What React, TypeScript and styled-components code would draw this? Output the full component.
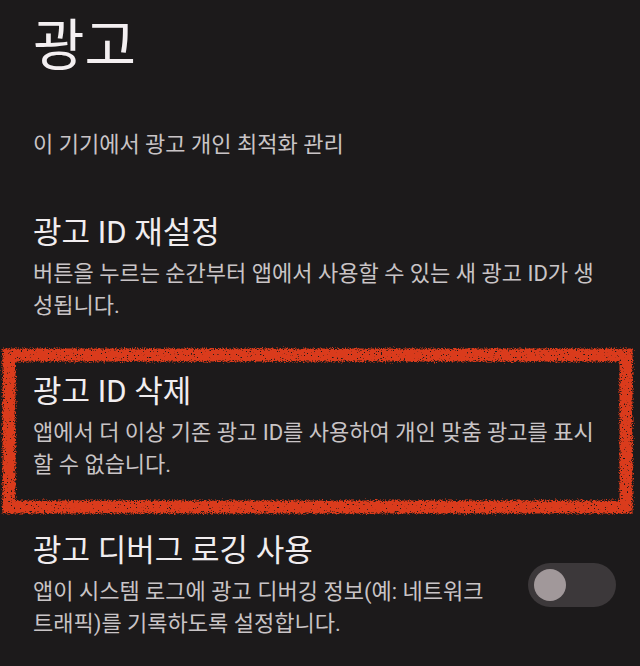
import React from 'react';
import styled, { createGlobalStyle } from 'styled-components';

const GlobalStyle = createGlobalStyle`
  html, body {
    margin: 0;
    padding: 0;
    background: #1c1a1b;
  }
  body {
    font-family: Roboto, "Noto Sans CJK KR", sans-serif;
    -webkit-font-smoothing: antialiased;
  }
`;

const Page = styled.main`
  width: 640px;
  height: 666px;
  overflow: hidden;
  background: #1c1a1b;
  color: #f1edef;
`;

const Header = styled.header`
  padding: 14px 33px 27px;
`;

const PageTitle = styled.h1`
  margin: 0;
  font-size: 56px;
  line-height: 64px;
  font-weight: 400;
  color: #f3eff1;
`;

const Intro = styled.p`
  margin: 51px 0 0;
  font-size: 22px;
  line-height: 32px;
  color: #c9c4c6;
`;

const Item = styled.section`
  position: relative;
  display: flex;
  align-items: center;
  gap: 24px;
  padding: 25px 24px 26px 33px;
`;

const ItemText = styled.div`
  flex: 1;
  min-width: 0;
  padding-right: 8px;
`;

const ItemTitle = styled.h2`
  margin: 0;
  font-size: 31px;
  line-height: 40px;
  font-weight: 400;
  color: #f1edef;
`;

const ItemDesc = styled.p`
  margin: 5px 0 0;
  font-size: 22px;
  line-height: 31.5px;
  color: #c9c4c6;
`;

const Switch = styled.button`
  flex-shrink: 0;
  width: 88px;
  height: 44px;
  border: none;
  border-radius: 22px;
  background: #3c383a;
  padding: 0 6px;
  display: flex;
  align-items: center;
  cursor: pointer;
`;

const Thumb = styled.span`
  width: 32px;
  height: 32px;
  border-radius: 50%;
  background: #a1989a;
`;

const Marker = styled.svg`
  position: absolute;
  top: 0;
  left: 0;
  width: 640px;
  height: 175px;
  overflow: visible;
  pointer-events: none;
  z-index: 2;
`;

const RoughFrame: React.FC = () => (
  <Marker viewBox="0 0 640 175" aria-hidden="true">
    <defs>
      <filter id="rough" x="-3%" y="-10%" width="106%" height="120%">
        <feTurbulence type="fractalNoise" baseFrequency="0.9" numOctaves="2" seed="3" result="noise" />
        <feDisplacementMap in="SourceGraphic" in2="noise" scale="6" xChannelSelector="R" yChannelSelector="G" result="disp" />
        <feTurbulence type="fractalNoise" baseFrequency="0.7" numOctaves="2" seed="11" result="speck" />
        <feColorMatrix
          in="speck"
          type="matrix"
          values="0 0 0 0 0  0 0 0 0 0  0 0 0 0 0  14 0 0 0 -9.6"
          result="holes"
        />
        <feComposite in="disp" in2="holes" operator="out" />
      </filter>
    </defs>
    <rect
      x="9"
      y="8"
      width="617"
      height="152"
      fill="none"
      stroke="#da3a1b"
      strokeWidth="13"
      filter="url(#rough)"
    />
  </Marker>
);

export default function App() {
  return (
    <>
      <GlobalStyle />
      <Page>
        <Header>
          <PageTitle>광고</PageTitle>
          <Intro>이 기기에서 광고 개인 최적화 관리</Intro>
        </Header>

        <Item>
          <ItemText>
            <ItemTitle>광고 ID 재설정</ItemTitle>
            <ItemDesc>버튼을 누르는 순간부터 앱에서 사용할 수 있는 새 광고 ID가 생성됩니다.</ItemDesc>
          </ItemText>
        </Item>

        <Item>
          <RoughFrame />
          <ItemText>
            <ItemTitle>광고 ID 삭제</ItemTitle>
            <ItemDesc>앱에서 더 이상 기존 광고 ID를 사용하여 개인 맞춤 광고를 표시할 수 없습니다.</ItemDesc>
          </ItemText>
        </Item>

        <Item>
          <ItemText>
            <ItemTitle>광고 디버그 로깅 사용</ItemTitle>
            <ItemDesc>앱이 시스템 로그에 광고 디버깅 정보(예: 네트워크 트래픽)를 기록하도록 설정합니다.</ItemDesc>
          </ItemText>
          <Switch type="button" role="switch" aria-checked={false} aria-label="광고 디버그 로깅 사용">
            <Thumb />
          </Switch>
        </Item>
      </Page>
    </>
  );
}
